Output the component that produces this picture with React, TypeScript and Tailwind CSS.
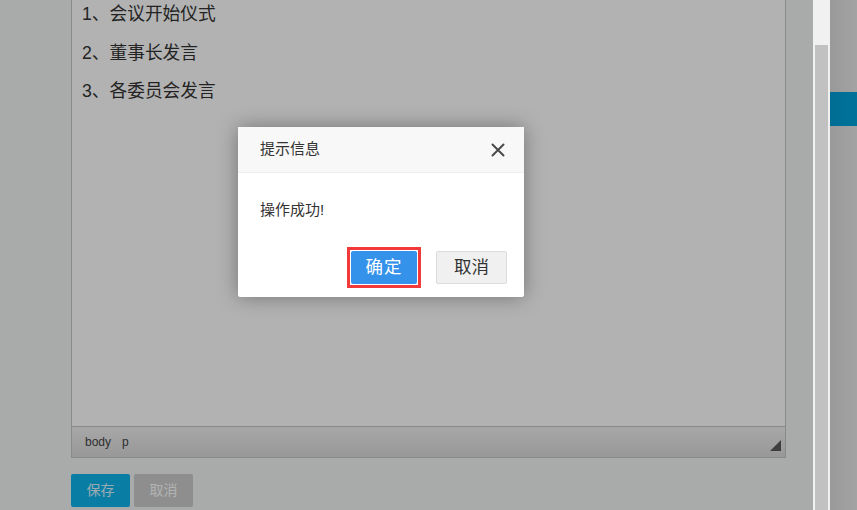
import * as React from "react";

const agenda = ["1、会议开始仪式", "2、董事长发言", "3、各委员会发言"];

function ResizeGrip() {
  return (
    <svg width="11" height="11" viewBox="0 0 11 11" className="absolute right-[4px] bottom-[6px]">
      <polygon points="11,0 11,11 0,11" fill="#5a5a5a" />
    </svg>
  );
}

function CloseIcon() {
  return (
    <svg width="14" height="14" viewBox="0 0 14 14">
      <path d="M1.5 1.5 L12.5 12.5 M12.5 1.5 L1.5 12.5" stroke="#4a4a4a" strokeWidth="2" strokeLinecap="round" />
    </svg>
  );
}

export default function App() {
  return (
    <div className="relative flex h-[510px] w-[857px] overflow-hidden bg-[#f3f4f4] font-['Liberation_Sans','Noto_Sans_CJK_SC',sans-serif]">
      {/* page body */}
      <div className="w-[813px] shrink-0 pl-[71px]">
        <div className="w-[715px] border border-t-0 border-[#c5c5c5] bg-white">
          <div className="h-[426px] pl-[10px] text-[17.7px] text-[#333]">
            {agenda.map((line) => (
              <p key={line} className="mb-[10.5px] leading-[28px]">
                {line}
              </p>
            ))}
          </div>
          <div className="relative flex h-[31px] items-center border-t border-[#c5c5c5] bg-gradient-to-b from-[#f0f0f0] to-[#dadada] pl-[13px] text-[12px] text-[#444]">
            <span>body</span>
            <span className="ml-[11px]">p</span>
            <ResizeGrip />
          </div>
        </div>
        <div className="mt-[16px] flex gap-[4px] text-[14px]">
          <button className="h-[33px] w-[59px] rounded-[2px] bg-[#0fb4ed] text-white/85">保存</button>
          <button className="h-[33px] w-[59px] rounded-[2px] bg-[#cccccc] text-white">取消</button>
        </div>
      </div>

      {/* scrollbar of the frame */}
      <div className="relative z-20 w-[17px] shrink-0 bg-[#f1f1f1] pt-[45px]">
        <div className="mx-[2px] h-full bg-[#c1c1c1]" />
      </div>

      {/* outer page strip */}
      <div className="flex-1 bg-gradient-to-r from-[#dcdcdc] to-[#eaeaea] pt-[92px]">
        <div className="h-[34px] bg-gradient-to-r from-[#009dd4] to-[#00a5dd]" />
      </div>

      {/* modal mask */}
      <div className="absolute inset-0 z-10 bg-black/30" />

      {/* dialog */}
      <div className="absolute left-[238px] top-[127px] z-30 w-[286px] rounded-[2px] bg-white shadow-[0_0_20px_rgba(0,0,0,0.35)]">
        <div className="flex h-[46px] items-center justify-between border-b border-[#eeeeee] bg-[#f8f8f8] pl-[22px] pr-[19px] text-[15px] text-[#333]">
          <span>提示信息</span>
          <CloseIcon />
        </div>
        <div className="px-[22px] pt-[27px] text-[15px] leading-[20px] text-[#333]">操作成功!</div>
        <div className="mt-[31px] flex justify-end gap-[19px] pr-[17px] pb-[13px] text-[17.5px]">
          <button className="relative h-[33px] w-[66px] rounded-[2px] bg-[#3592ea] tracking-[1px] text-white">
            确定
            <span className="absolute -inset-[4px] border-[3px] border-[#f23a3a]" />
          </button>
          <button className="h-[33px] w-[71px] rounded-[2px] border border-[#dcdcdc] bg-[#f0f0f0] text-[#333]">
            取消
          </button>
        </div>
      </div>
    </div>
  );
}
